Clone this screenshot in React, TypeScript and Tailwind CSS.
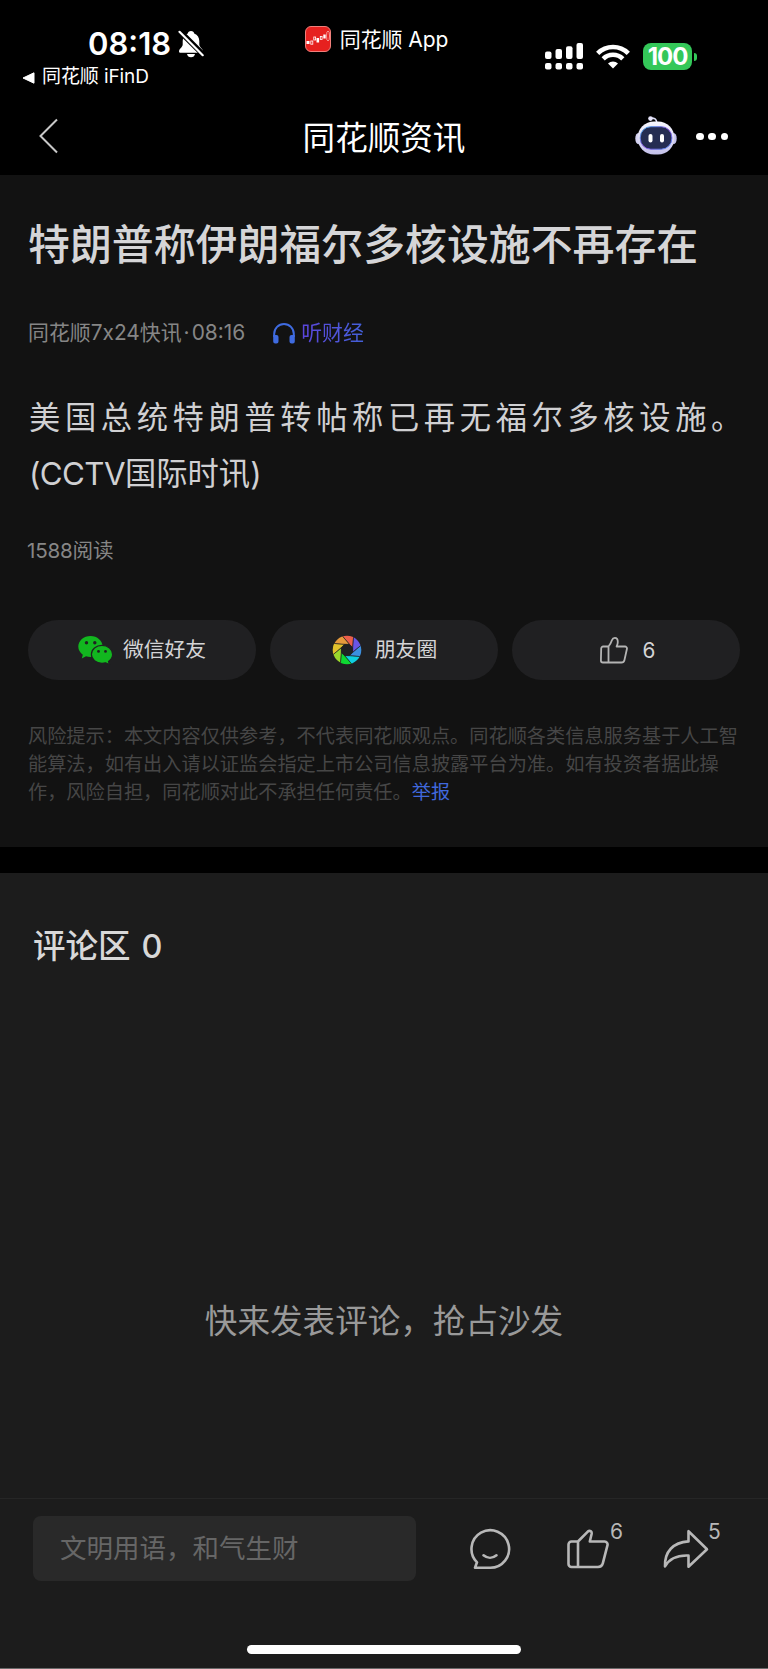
import type { ReactNode } from "react";

const SHUTTER_COLORS = [
  "#ec5f4b",
  "#6a55e6",
  "#3b8fe0",
  "#0fcfe0",
  "#0ed832",
  "#9bd82c",
  "#e2c12c",
  "#e69a3c",
];

function MutedBellIcon() {
  return (
    <svg className="h-[28px] w-[26px]" viewBox="0 0 26 28">
      <path
        d="M13 1c-1.9 0-3 1-3.200 2.400C6.300 4.700 4.700 7.600 4.700 11v3.500c0 2.600-3.700 4.500-3.700 6.700 0 1 .7 1.500 1.700 1.500h20.600c1 0 1.700-.5 1.700-1.500 0-2.200-3.700-4.100-3.700-6.700V11c0-3.400-1.600-6.300-5.100-7.600C16 2 14.900 1 13 1z"
        fill="#fff"
      />
      <path d="M9 24h8c-.3 2-1.900 3.300-4 3.300S9.300 26 9 24z" fill="#fff" />
      <path d="M1.500 1L26.500 25.800" stroke="#000" strokeWidth="5.500" />
      <path d="M1.500 1.800L24.700 25.200" stroke="#fff" strokeWidth="2.200" strokeLinecap="round" />
    </svg>
  );
}

function AppIcon() {
  return (
    <svg className="h-[26px] w-[26px]" viewBox="0 0 26 26">
      <rect x="0.500" y="0.500" width="25" height="25" rx="5.500" fill="#e6211f" stroke="#f0807c" />
      <g fill="#fff">
        <rect x="1.500" y="15" width="3" height="3" />
        <rect x="11.500" y="12" width="2.600" height="4.500" />
        <rect x="18.300" y="8.500" width="2.400" height="4" />
      </g>
      <g fill="none" stroke="#fff" strokeWidth="0.800">
        <rect x="5.800" y="15" width="2" height="3.200" />
        <rect x="8.800" y="11" width="1.800" height="3" />
        <rect x="15.300" y="10.500" width="1.800" height="3" />
        <ellipse cx="23" cy="10" rx="1.500" ry="5" stroke="#f8b8b4" />
      </g>
    </svg>
  );
}

function SignalIcon() {
  return (
    <svg className="h-[27px] w-[38px]" viewBox="0 0 38 27" fill="#fff">
      <rect x="0" y="8.500" width="6.500" height="7.500" rx="2" />
      <rect x="10.500" y="6" width="6.500" height="10" rx="2" />
      <rect x="21" y="3.300" width="6.500" height="12.700" rx="2" />
      <rect x="31.500" y="0" width="6.500" height="16" rx="2" />
      <rect x="0" y="20" width="6.500" height="6.500" rx="2" />
      <rect x="10.500" y="20" width="6.500" height="6.500" rx="2" />
      <rect x="21" y="20" width="6.500" height="6.500" rx="2" />
      <rect x="31.500" y="20" width="6.500" height="6.500" rx="2" />
    </svg>
  );
}

function WifiIcon() {
  return (
    <svg className="h-[25px] w-[34px]" viewBox="0 0 34 25">
      <g fill="none" stroke="#fff" strokeWidth="4.600">
        <path d="M1.700 9.300a21.800 21.800 0 0 1 30.600 0" />
        <path d="M7.200 14.800a14 14 0 0 1 19.600 0" />
      </g>
      <path d="M17 24.600l-5-5a7.200 7.200 0 0 1 10 0z" fill="#fff" />
    </svg>
  );
}

function RobotIcon() {
  return (
    <svg className="h-[40px] w-[42px]" viewBox="0 0 42 40">
      <defs>
        <linearGradient id="shell" x1="0" y1="0" x2="0" y2="1">
          <stop offset="0" stopColor="#f8f8ff" />
          <stop offset="1" stopColor="#c3c0ea" />
        </linearGradient>
        <linearGradient id="rim" x1="0" y1="0" x2="1" y2="1">
          <stop offset="0" stopColor="#3fb4e8" />
          <stop offset="0.500" stopColor="#8a4fe0" />
          <stop offset="1" stopColor="#4e8ff0" />
        </linearGradient>
      </defs>
      <path d="M15.500 2.200c4-.5 6 1 6.300 4.500" fill="none" stroke="#dcdcf5" strokeWidth="1.600" />
      <circle cx="15.500" cy="2.600" r="2.300" fill="#e6e4fa" />
      <ellipse cx="3.300" cy="22.500" rx="3" ry="5.500" fill="#d2d0f0" />
      <ellipse cx="38.700" cy="22.500" rx="3" ry="5.500" fill="#c4c2ec" />
      <rect x="2.500" y="5.500" width="37" height="33" rx="16.500" fill="url(#shell)" />
      <rect x="5.300" y="10.700" width="31.500" height="22.500" rx="10.500" fill="#252d52" stroke="url(#rim)" />
      <rect x="13.500" y="18" width="4" height="8.500" rx="2" fill="#fff" />
      <rect x="25" y="18" width="4" height="8.500" rx="2" fill="#fff" />
    </svg>
  );
}

function WechatIcon() {
  return (
    <svg className="h-[30px] w-[35px]" viewBox="0 0 35 30" fill="#12b71f">
      <path d="M12.500 1C5.700 1 .3 5.700.3 11.600c0 3.300 1.700 6.200 4.500 8.200l-1 3.700 4.200-2.200c1.400.4 2.900.7 4.500.7 6.800 0 12.100-4.700 12.100-10.400S19.300 1 12.500 1z" />
      <path
        d="M24 10.300c-5.900 0-10.600 4-10.600 9s4.700 9 10.600 9c1.300 0 2.500-.2 3.700-.5l3.700 1.800-.9-3c2.500-1.800 4.100-4.300 4.100-7.300 0-5-4.700-9-10.600-9z"
        stroke="#202022"
        strokeWidth="1.200"
      />
      <g fill="#202022">
        <circle cx="8.500" cy="7.800" r="1.700" />
        <circle cx="16.800" cy="7.800" r="1.700" />
        <circle cx="20.500" cy="16.400" r="1.400" />
        <circle cx="27.500" cy="16.400" r="1.400" />
      </g>
    </svg>
  );
}

function MomentsIcon() {
  return (
    <svg className="ml-px h-[30px] w-[30px]" viewBox="-15 -15 30 30">
      <defs>
        <clipPath id="disc">
          <circle r="14.300" />
        </clipPath>
      </defs>
      <g clipPath="url(#disc)">
        {SHUTTER_COLORS.map((color, i) => (
          <path
            key={color}
            d="M2.400 -5.700L-5.500 -15L-4 -18L7 -18L5.700 -2.400z"
            fill={color}
            stroke="#202022"
            strokeWidth="0.600"
            transform={`rotate(${i * 45})`}
          />
        ))}
        <path
          d="M2.400 -5.700L5.700 -2.400L5.700 2.400L2.400 5.700L-2.400 5.700L-5.700 2.400L-5.700 -2.400L-2.400 -5.700z"
          fill="#202022"
        />
      </g>
    </svg>
  );
}

function SmallLikeIcon() {
  return (
    <svg
      className="ml-[3px] h-[27px] w-[28px]"
      viewBox="0 0 28 27"
      fill="none"
      stroke="#b4b4b4"
      strokeWidth="1.800"
      strokeLinejoin="round"
    >
      <path d="M8.500 9.500H3.200A2 2 0 0 0 1.200 11.500L.9 23.500a2 2 0 0 0 2 2H21.500a3 3 0 0 0 2.900-2.300L26.900 12a2 2 0 0 0-2-2.500H16.600c.8-1.600 1.200-3 1.200-4.600C17.800 2.300 16.600.9 14.800.9c-1.600 0-2.300.8-2.900 2.400C11 5.900 10 7.900 8.500 9.500zM8.500 9.500V25.500" />
    </svg>
  );
}

function CommentIcon() {
  return (
    <svg
      className="h-[42px] w-[42px]"
      viewBox="0 0 42 42"
      fill="none"
      stroke="#b8b8b8"
      strokeWidth="2.600"
      strokeLinejoin="round"
      strokeLinecap="round"
    >
      <path d="M21 39.800H6L8 34.300A18.800 18.800 0 1 1 21 39.800z" />
      <path d="M14.500 27.300c4 3.300 9 3.300 13 0" />
    </svg>
  );
}

function LikeIcon() {
  return (
    <svg
      className="h-[40px] w-[42px]"
      viewBox="0 0 42 40"
      fill="none"
      stroke="#b8b8b8"
      strokeWidth="2.600"
      strokeLinejoin="round"
    >
      <path d="M11 12.500H4.500A3 3 0 0 0 1.500 15.500V35a3 3 0 0 0 3 3H31a5 5 0 0 0 4.800-3.600L40.500 16.200A3 3 0 0 0 37.700 12.500H22.800L24.600 5C25.100 2.400 22.900.9 20.800 2.600zM11 12.500V38" />
    </svg>
  );
}

function ShareIcon() {
  return (
    <svg
      className="h-[40px] w-[46px]"
      viewBox="0 0 46 40"
      fill="none"
      stroke="#b8b8b8"
      strokeWidth="2.600"
      strokeLinejoin="round"
    >
      <path d="M25.500 2.200V12.400C10 13.500 1.500 22.500 2 37.500 6.500 29.200 14 26 25.500 26.500V37.800L44 20.300z" />
    </svg>
  );
}

function StatusBar() {
  return (
    <div className="flex h-[97px] justify-between text-white">
      <div className="w-[240px] pt-[26px] pl-[22px]">
        <div className="flex h-[36px] items-center gap-[7px] pl-[66px]">
          <span className="text-[31px] font-semibold">08:18</span>
          <MutedBellIcon />
        </div>
        <div className="flex h-[31px] items-center gap-[7px]">
          <svg className="h-[12px] w-[13px]" viewBox="0 0 13 12">
            <path d="M1 6L12 0.800V11.200z" fill="#fff" stroke="#fff" strokeLinejoin="round" />
          </svg>
          <span className="text-[19px] tracking-[-0.1px] whitespace-pre">同花顺 iFinD</span>
        </div>
      </div>
      <div className="mt-[26px] -ml-[32px] flex h-[26px] items-center gap-[9px]">
        <AppIcon />
        <span className="pt-[2px] text-[21px] tracking-[-0.1px] whitespace-pre">同花顺 App</span>
      </div>
      <div className="mt-[43px] mr-[71px] flex h-[27px] items-center">
        <SignalIcon />
        <div className="ml-[13px]">
          <WifiIcon />
        </div>
        <div className="ml-[13px] flex h-[27px] w-[49px] items-center justify-center rounded-[8px] bg-[#34c759]">
          <span className="text-[24px] leading-none font-bold tracking-[-1px]">100</span>
        </div>
        <div className="ml-[2px] h-[8px] w-[3px] rounded-r-full bg-[#34c759]" />
      </div>
    </div>
  );
}

function NavBar() {
  return (
    <div className="grid h-[78px] grid-cols-[1fr_auto_1fr] items-center text-white">
      <svg className="ml-[38px] h-[36px] w-[20px]" viewBox="0 0 20 36">
        <path d="M19 1.500L2.500 18L19 34.500" fill="none" stroke="#c8c8c8" strokeWidth="2" />
      </svg>
      <h1 className="pt-[3px] text-[32.600px] leading-[40px]">同花顺资讯</h1>
      <div className="flex items-center justify-end pr-[40px]">
        <RobotIcon />
        <div className="ml-[19px] flex gap-[4.700px] pt-px">
          <i className="size-[7.500px] rounded-full bg-white" />
          <i className="size-[7.500px] rounded-full bg-white" />
          <i className="size-[7.500px] rounded-full bg-white" />
        </div>
      </div>
    </div>
  );
}

function PillButton({ children }: { children: ReactNode }) {
  return (
    <button className="flex h-[60px] items-center justify-center rounded-full bg-[#202022] text-[20.800px] text-[#d4d4d6]">
      {children}
    </button>
  );
}

function Article() {
  return (
    <article className="h-[672px] bg-[#121212] px-[28px] pt-[41px]">
      <h2 className="text-[41.900px] leading-[58px] font-medium whitespace-nowrap text-[#d5d5d7]">
        特朗普称伊朗福尔多核设施不再存在
      </h2>
      <div className="mt-[44px] flex h-[30px] items-center text-[20.900px] leading-[30px] text-[#868686]">
        <span>
          同花顺7x24快讯<span className="mx-[2px]">·</span>08:16
        </span>
        <svg className="ml-[28px] h-[21px] w-[22px]" viewBox="0 0 22 21">
          <path d="M1.200 14V10.800a9.800 9.800 0 0 1 19.600 0V14" fill="none" stroke="#3f6be0" strokeWidth="2" />
          <path
            d="M0.200 12h3.300a2 2 0 0 1 2 2v4.500a2 2 0 0 1-2 2H2.200a2 2 0 0 1-2-2zM21.800 12h-3.300a2 2 0 0 0-2 2v4.500a2 2 0 0 0 2 2h1.300a2 2 0 0 0 2-2z"
            fill="#3f6be0"
          />
        </svg>
        <span className="ml-[6px] bg-linear-to-r from-[#5b45dc] to-[#4360d8] bg-clip-text text-transparent">
          听财经
        </span>
      </div>
      <div className="mt-[42px] pl-px text-[31.300px] leading-[56px] whitespace-nowrap text-[#d0d0d2]">
        <p className="tracking-[4.600px]">美国总统特朗普转帖称已再无福尔多核设施。</p>
        <p>
          <span className="tracking-[-0.6px]">(CCTV</span>国际时讯)
        </p>
      </div>
      <p className="mt-[34px] -ml-px text-[20.600px] leading-[30px] tracking-[-0.2px] text-[#868686]">1588阅读</p>
      <div className="mt-[54px] grid grid-cols-3 gap-[14px]">
        <PillButton>
          <WechatIcon />
          <span className="ml-[10px]">微信好友</span>
        </PillButton>
        <PillButton>
          <MomentsIcon />
          <span className="ml-[13px]">朋友圈</span>
        </PillButton>
        <PillButton>
          <SmallLikeIcon />
          <span className="ml-[15px] pt-px">6</span>
        </PillButton>
      </div>
      <p className="mt-[42px] text-[19.200px] leading-[28px] whitespace-nowrap text-[#464646]">
        风险提示：本文内容仅供参考，不代表同花顺观点。同花顺各类信息服务基于人工智
        <br />
        能算法，如有出入请以证监会指定上市公司信息披露平台为准。如有投资者据此操
        <br />
        作，风险自担，同花顺对此不承担任何责任。
        <a className="text-[#4068dc]">举报</a>
      </p>
    </article>
  );
}

function Comments() {
  return (
    <section className="flex h-[625px] flex-col pt-[54px]">
      <h3 className="pl-[33px] text-[32.500px] leading-[40px] font-medium text-[#d8d8d8]">
        评论区<span className="ml-[11px]">0</span>
      </h3>
      <p className="mt-[334px] text-center text-[32.600px] leading-[40px] text-[#999]">快来发表评论，抢占沙发</p>
    </section>
  );
}

function ActionBar() {
  return (
    <footer className="h-[171px] border-t border-b border-t-[#262626] border-b-[#6a6a6a]">
      <div className="mt-[17px] flex h-[65px] items-center pl-[33px]">
        <div className="flex h-[65px] w-[383px] items-center rounded-[8px] bg-[#292929] pl-[27px] text-[26.500px] text-[#666]">
          文明用语，和气生财
        </div>
        <div className="ml-[53px]">
          <CommentIcon />
        </div>
        <div className="ml-[56px] flex items-center">
          <LikeIcon />
          <span className="mb-[33px] ml-px w-[14px] text-[21px] leading-[20px] text-[#b8b8b8]">6</span>
        </div>
        <div className="ml-[39px] flex items-center">
          <ShareIcon />
          <span className="mb-[33px] -ml-px w-[14px] text-[21px] leading-[20px] text-[#b8b8b8]">5</span>
        </div>
      </div>
      <div className="mx-auto mt-[64px] h-[9px] w-[274px] rounded-full bg-white" />
    </footer>
  );
}

export default function App() {
  return (
    <div
      lang="zh-CN"
      className="h-[1669px] w-[768px] overflow-hidden bg-[#1c1c1c] font-['Inter','Noto_Sans_CJK_SC',sans-serif]"
    >
      <header className="h-[175px] bg-black">
        <StatusBar />
        <NavBar />
      </header>
      <Article />
      <div className="h-[26px] bg-black" />
      <Comments />
      <ActionBar />
    </div>
  );
}
